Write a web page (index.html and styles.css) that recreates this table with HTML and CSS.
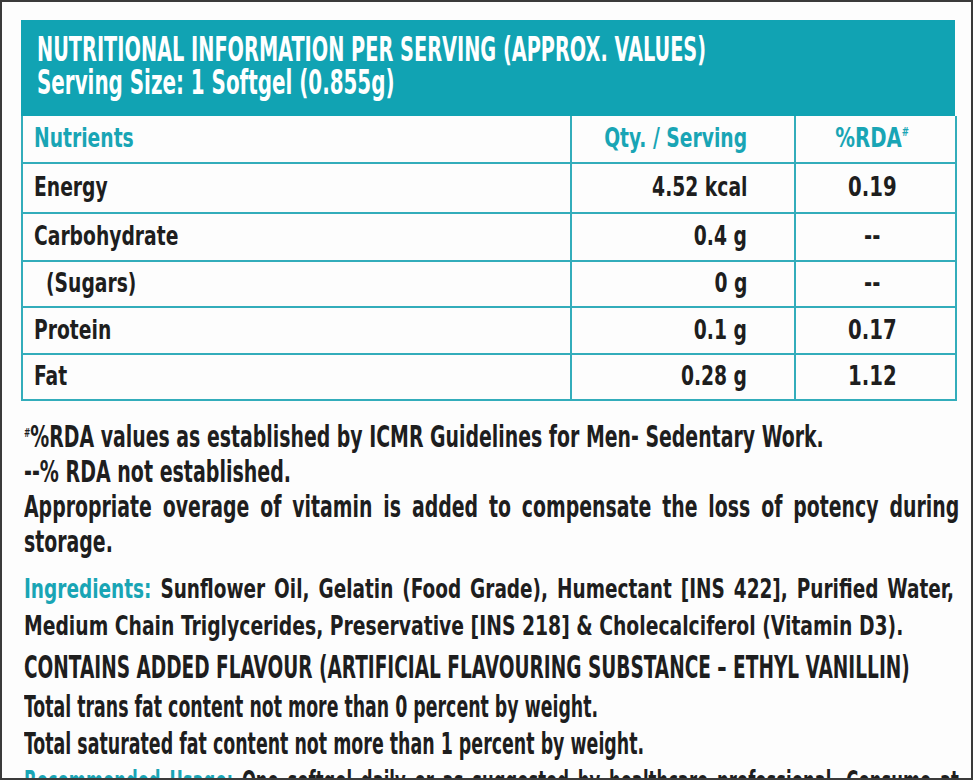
FILE: index.html
```html
<!DOCTYPE html>
<html lang="en">
<head>
<meta charset="utf-8">
<title>Nutritional Information</title>
<link rel="stylesheet" href="styles.css">
</head>
<body>
<div class="frame">
  <div class="label">
    <div class="banner">
      <div class="banner-line"><span class="sq">NUTRITIONAL INFORMATION PER SERVING (APPROX. VALUES)</span></div>
      <div class="banner-line"><span class="sq sq2">Serving Size: 1 Softgel (0.855g)</span></div>
    </div>
    <table class="facts">
      <colgroup>
        <col class="c-name">
        <col class="c-qty">
        <col class="c-rda">
      </colgroup>
      <thead>
        <tr>
          <th class="name"><span class="cell">Nutrients</span></th>
          <th class="qty"><span class="cell">Qty. / Serving</span></th>
          <th class="rda"><span class="cell">%RDA<sup>#</sup></span></th>
        </tr>
      </thead>
      <tbody>
        <tr><td class="name"><span class="cell">Energy</span></td><td class="qty"><span class="cell">4.52 kcal</span></td><td class="rda"><span class="cell">0.19</span></td></tr>
        <tr><td class="name"><span class="cell">Carbohydrate</span></td><td class="qty"><span class="cell">0.4 g</span></td><td class="rda"><span class="cell">--</span></td></tr>
        <tr><td class="name sub"><span class="cell">(Sugars)</span></td><td class="qty"><span class="cell">0 g</span></td><td class="rda"><span class="cell">--</span></td></tr>
        <tr><td class="name"><span class="cell">Protein</span></td><td class="qty"><span class="cell">0.1 g</span></td><td class="rda"><span class="cell">0.17</span></td></tr>
        <tr><td class="name"><span class="cell">Fat</span></td><td class="qty"><span class="cell">0.28 g</span></td><td class="rda"><span class="cell">1.12</span></td></tr>
      </tbody>
    </table>
  </div>

  <div class="notes">
    <div class="ln n1"><sup>#</sup>%RDA values as established by ICMR Guidelines for Men- Sedentary Work.</div>
    <div class="ln n2">--% RDA not established.</div>
    <div class="ln n3 just">Appropriate overage of vitamin is added to compensate the loss of potency during</div>
    <div class="ln n4">storage.</div>
    <div class="ln i1 just"><span class="teal">Ingredients:</span> Sunflower Oil, Gelatin (Food Grade), Humectant [INS 422], Purified Water,</div>
    <div class="ln i2">Medium Chain Triglycerides, Preservative [INS 218] &amp; Cholecalciferol (Vitamin D3).</div>
    <div class="ln c1">CONTAINS ADDED FLAVOUR (ARTIFICIAL FLAVOURING SUBSTANCE – ETHYL VANILLIN)</div>
    <div class="ln t1">Total trans fat content not more than 0 percent by weight.</div>
    <div class="ln t2">Total saturated fat content not more than 1 percent by weight.</div>
    <div class="ln r1 just"><span class="teal">Recommended Usage:</span> One softgel daily or as suggested by healthcare professional. Consume at</div>
  </div>
</div>
</body>
</html>
```

FILE: styles.css
```css
html, body {
  margin: 0;
  padding: 0;
  background: #ffffff;
}

body {
  font-family: "DejaVu Sans Condensed", "DejaVu Sans", sans-serif;
  font-weight: 700;
  color: #1e1e1e;
}

.frame {
  width: 973px;
  height: 780px;
  box-sizing: border-box;
  border: 2px solid #3a3a3a;
  padding: 18px 0 0 19px;
  overflow: hidden;
  background: #fdfdfd;
}

/* ---------- label / table ---------- */
.label {
  width: 934px;
}

.banner {
  height: 96px;
  box-sizing: border-box;
  background: #11a3b3;
  color: #ffffff;
  padding: 13px 0 0 16px;
}

.banner-line {
  height: 33px;
  line-height: 33px;
  font-size: 33.5px;
  white-space: nowrap;
}

.sq {
  display: inline-block;
  transform: scaleX(0.641);
  transform-origin: left center;
}

.sq2 {
  transform: scaleX(0.66);
}

.facts {
  width: 934px;
  border-collapse: collapse;
  table-layout: fixed;
}

.c-name { width: 549px; }
.c-qty { width: 224px; }
.c-rda { width: 161px; }

.facts th,
.facts td {
  border: 2px solid #33adbb;
  font-size: 27.4px;
  line-height: 30px;
  height: 47px;
  box-sizing: border-box;
  padding: 0 0 2px 0;
  vertical-align: middle;
  white-space: nowrap;
  font-weight: 700;
}

.facts tbody tr:nth-child(1) td { height: 50px; }
.facts tbody tr:nth-child(2) td { height: 48px; }
.facts tbody tr:nth-child(3) td { height: 46px; }
.facts tbody tr:nth-child(4) td { height: 47px; }
.facts tbody tr:nth-child(5) td { height: 46px; }

.facts thead th {
  border-top: 0;
  color: #19a5b5;
}

.cell {
  display: inline-block;
  transform: scaleX(0.76);
}

.name {
  text-align: left;
  padding-left: 11px !important;
}

.name .cell {
  transform-origin: left center;
}

.name.sub {
  padding-left: 23px !important;
}

.qty {
  text-align: right;
  padding-right: 47px !important;
}

.qty .cell {
  transform-origin: right center;
  margin-left: -60px;
}

.rda {
  text-align: center;
  padding-right: 6px !important;
}

.rda .cell {
  transform-origin: center center;
  transform: scaleX(0.8);
  margin: 0 -30px;
}

.rda sup {
  font-size: 12px;
  vertical-align: 11px;
  line-height: 0;
}

/* ---------- notes below the table ---------- */
.notes {
  margin: 18px 0 0 3px;
}

.ln {
  white-space: nowrap;
  width: max-content;
  transform-origin: left top;
}

.ln sup {
  font-size: 12px;
  vertical-align: 10px;
  line-height: 0;
}

.just {
  white-space: normal;
  text-align: justify;
  text-align-last: justify;
}

.n1, .n2, .n3, .n4 {
  font-size: 30px;
  height: 35px;
  line-height: 35px;
  transform: scaleX(0.70);
}

.n2 { transform: scaleX(0.705); }

.n3 {
  width: 1336px;
}

.i1, .i2 {
  font-size: 27.4px;
  height: 37px;
  line-height: 37px;
}

.i1 {
  margin-top: 11px;
  width: 1240px;
  transform: scaleX(0.75);
}

.i2 {
  transform: scaleX(0.762);
}

.c1 {
  font-size: 31.5px;
  height: 40px;
  line-height: 40px;
  margin-top: 3px;
  transform: scaleX(0.654);
}

.t1, .t2 {
  font-size: 29.5px;
  height: 37px;
  line-height: 37px;
}

.t1 {
  margin-top: 2px;
  transform: scaleX(0.654);
}

.t2 {
  transform: scaleX(0.656);
}

.r1 {
  font-size: 29px;
  height: 37px;
  line-height: 37px;
  width: 1484px;
  transform: scaleX(0.63);
}

.teal {
  color: #19a5b5;
}
```
